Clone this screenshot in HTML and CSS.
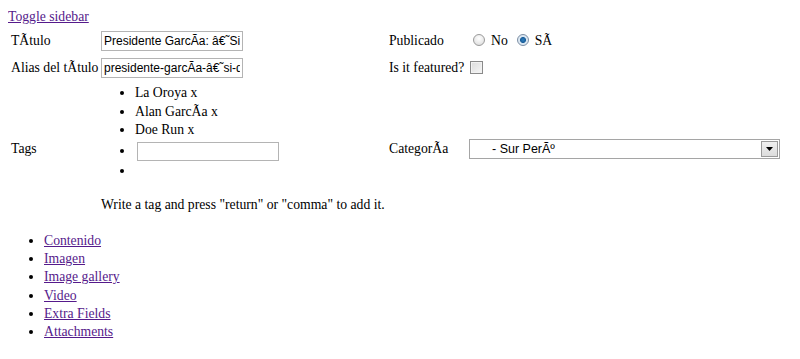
FILE: index.html
```html
<!DOCTYPE html>
<html>
<head>
<meta charset="utf-8">
<link rel="stylesheet" href="styles.css">
</head>
<body>
<a href="#" class="toggle">Toggle sidebar</a>
<table class="form">
  <tr>
    <td class="c1"><span class="lbl">TÃtulo</span></td>
    <td class="c2"><input class="text" type="text" value="Presidente GarcÃa: â€˜Si, lo haremos"></td>
    <td class="c3">Publicado</td>
    <td class="c4"><span class="radio"></span><span class="rlabel">No</span><span class="radio on"></span><span class="rlabel">SÃ</span></td>
  </tr>
  <tr>
    <td class="c1"><span class="lbl">Alias del tÃtulo</span></td>
    <td class="c2"><input class="text" type="text" value="presidente-garcÃa-â€˜si-de-lo-haremos"></td>
    <td class="c3">Is it featured?</td>
    <td class="c4"><span class="check"></span></td>
  </tr>
  <tr class="tagrow">
    <td class="c1"><span class="lbl">Tags</span></td>
    <td class="c2">
      <ul class="tags">
        <li>La Oroya x</li>
        <li>Alan GarcÃa x</li>
        <li>Doe Run x</li>
        <li class="tagin"><input class="text tagfield" type="text"></li>
        <li></li>
      </ul>
      <div class="hint">Write a tag and press "return" or "comma" to add it.</div>
    </td>
    <td class="c3">CategorÃa</td>
    <td class="c4"><div class="select"><span class="seltext">- Sur PerÃº</span><span class="selbtn"><svg width="7" height="4" viewBox="0 0 7 4"><path d="M0 0H7L3.5 4Z" fill="#000"/></svg></span></div></td>
  </tr>
</table>
<ul class="nav">
  <li><a href="#">Contenido</a></li>
  <li><a href="#">Imagen</a></li>
  <li><a href="#">Image gallery</a></li>
  <li><a href="#">Video</a></li>
  <li><a href="#">Extra Fields</a></li>
  <li><a href="#">Attachments</a></li>
</ul>
</body>
</html>
```
FILE: styles.css
```css
body {
  margin: 8px;
  font-family: "Liberation Serif", "Times New Roman", serif;
  font-size: 13.7px;
  line-height: 18px;
  color: #000;
  background: #fff;
}
a { color: #551a8b; }
.toggle { display: inline-block; }
.form {
  width: 100%;
  border-spacing: 2px 1px;
  margin-top: 1px;
}
.form td {
  padding: 3px 1px;
  vertical-align: middle;
}
.form .tagrow td { padding: 2px 1px 12px; }
.c1 { width: 86px; }
.lbl { display: block; width: 86px; white-space: nowrap; }
.c2 { width: 284px; }
.c3 { width: 76px; white-space: nowrap; }
.text {
  box-sizing: border-box;
  width: 142px;
  height: 20px;
  margin: 0;
  padding: 1px 2px;
  border: 1px solid #b4b4b4;
  font-family: "Liberation Sans", Arial, sans-serif;
  font-size: 12px;
  color: #000;
  background: #fff;
  outline: none;
  vertical-align: middle;
}
.tags {
  margin: 0;
  padding-left: 34px;
  line-height: 18.5px;
}
.tags .tagin { height: 22px; line-height: 22px; }
.tagfield { margin-left: 2px; width: 142px; height: 19px; }
.hint { margin-top: 15.5px; line-height: 18.5px; }
.radio {
  display: inline-block;
  box-sizing: border-box;
  width: 12px;
  height: 12px;
  border-radius: 50%;
  border: 1px solid #9a9a9a;
  background: radial-gradient(circle at 50% 35%, #fff 0, #e8e8e8 60%, #d4d4d4 100%);
  vertical-align: -1px;
  margin: 0 6px 0 4px;
}
.radio.on {
  background: radial-gradient(circle, #2d7fc0 0, #1d5f9a 2.6px, #d8e6f2 3.4px, #e9eef4 100%);
  border-color: #7c8ea4;
  margin-left: 9px;
}
.check {
  display: inline-block;
  box-sizing: border-box;
  width: 13px;
  height: 13px;
  border: 1px solid #8a8a8a;
  background: linear-gradient(135deg, #dcdcdc, #f6f6f6);
  box-shadow: inset 0 0 0 1px #f2f2f2;
  vertical-align: -2px;
  margin-left: 1px;
}
.select {
  box-sizing: border-box;
  width: 311px;
  height: 20px;
  border: 1px solid #a5a5a5;
  display: flex;
  align-items: center;
  font-family: "Liberation Sans", Arial, sans-serif;
  font-size: 12.5px;
}
.seltext { padding-left: 22px; flex: 1; }
.selbtn {
  box-sizing: border-box;
  width: 17px;
  height: 16px;
  margin-right: 1px;
  border: 1px solid #9a9a9a;
  background: linear-gradient(#f0f0f0, #dcdcdc);
  display: flex;
  align-items: center;
  justify-content: center;
}
.nav {
  margin: 5px 0 0;
  padding-left: 36px;
  line-height: 18.2px;
}
```
